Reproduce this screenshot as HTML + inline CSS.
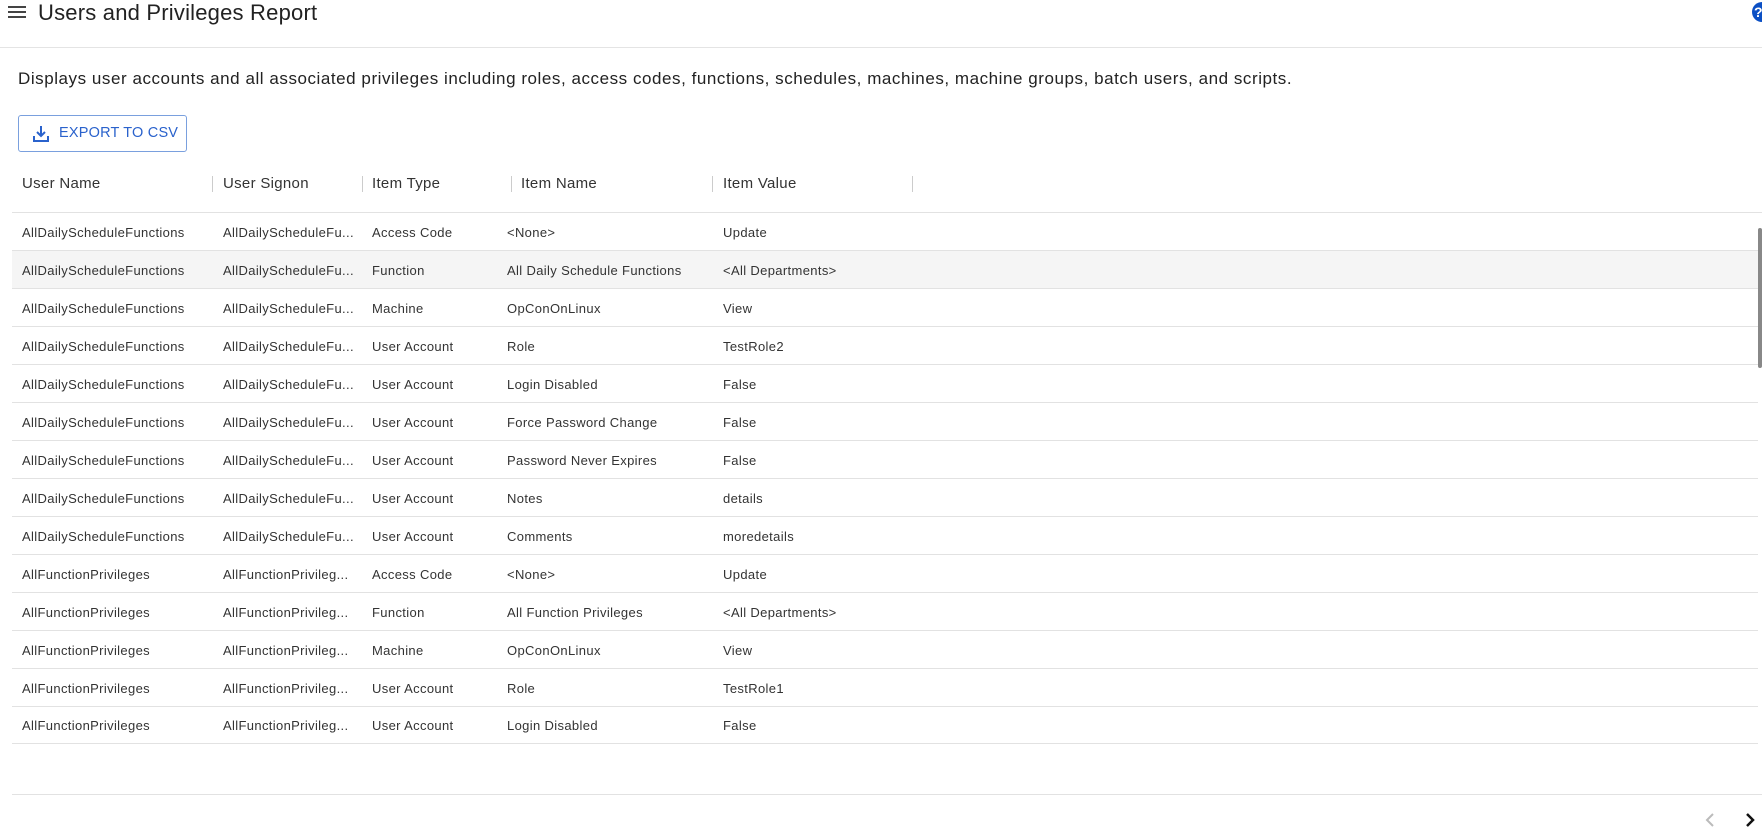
<!DOCTYPE html>
<html><head><meta charset="utf-8"><style>
*{box-sizing:border-box;margin:0;padding:0}
body{width:1762px;height:837px;overflow:hidden;background:#fff;font-family:"Liberation Sans",sans-serif;color:#222;position:relative}
.hdr{position:absolute;left:0;top:0;width:1762px;height:48px;border-bottom:1px solid #e4e4e4}
.ham{position:absolute;left:8px;top:6px;width:18px;height:12px}
.ham i{display:block;height:2px;background:#444;margin-bottom:3px}
.title{position:absolute;left:38px;top:0px;font-size:22px;line-height:26px;color:#222;letter-spacing:0.2px}
.help{position:absolute;left:1752px;top:2px;width:20px;height:20px;border-radius:50%;background:#0b4fc4;color:#fff;font-size:14px;font-weight:bold;line-height:20px;text-indent:2px}
.desc{position:absolute;left:18px;top:69px;font-size:17px;letter-spacing:0.55px;line-height:20px;color:#222}
.btn{position:absolute;left:18px;top:115px;width:169px;height:37px;border:1px solid #7aa0de;border-radius:3px;color:#2a62cc;font-size:14.5px;line-height:35px;padding-left:40px;letter-spacing:0.2px}
.btn svg{position:absolute;left:13px;top:9px}
.th{position:absolute;top:174px;font-size:15px;color:#333;line-height:20px;letter-spacing:0.3px}
.sep{position:absolute;top:176px;width:1px;height:16px;background:#ccc}
.row{position:absolute;left:12px;width:1746px;height:38px;border-bottom:1px solid #e2e2e2;font-size:13px;color:#333;letter-spacing:0.35px}
.row span{position:absolute;top:12px;white-space:nowrap}
.hl{background:#f5f5f5}
.line{position:absolute;left:12px;width:1750px;height:1px;background:#e2e2e2}
.sb{position:absolute;left:1758px;top:228px;width:4px;height:140px;background:#888;border-radius:2px}
</style></head><body>
<div class="hdr"><div class="ham"><i></i><i></i><i></i></div><div class="title">Users and Privileges Report</div><div class="help">?</div></div>
<div class="desc">Displays user accounts and all associated privileges including roles, access codes, functions, schedules, machines, machine groups, batch users, and scripts.</div>
<div class="btn"><svg width="18" height="18" viewBox="0 0 18 18" fill="none" stroke="#2a62cc" stroke-width="2"><path d="M9 1v10M5 7l4 4 4-4M2 11v5h14v-5"/></svg>EXPORT TO CSV</div>
<div class="th" style="left:22px">User Name</div><div class="sep" style="left:212px"></div>
<div class="th" style="left:223px">User Signon</div><div class="sep" style="left:362px"></div>
<div class="th" style="left:372px">Item Type</div><div class="sep" style="left:511px"></div>
<div class="th" style="left:521px">Item Name</div><div class="sep" style="left:712px"></div>
<div class="th" style="left:723px">Item Value</div><div class="sep" style="left:912px"></div>
<div class="line" style="top:212px"></div>
<div class="row" style="top:213px"><span style="left:10px">AllDailyScheduleFunctions</span><span style="left:211px">AllDailyScheduleFu...</span><span style="left:360px">Access Code</span><span style="left:495px">&lt;None&gt;</span><span style="left:711px">Update</span></div>
<div class="row hl" style="top:251px"><span style="left:10px">AllDailyScheduleFunctions</span><span style="left:211px">AllDailyScheduleFu...</span><span style="left:360px">Function</span><span style="left:495px">All Daily Schedule Functions</span><span style="left:711px">&lt;All Departments&gt;</span></div>
<div class="row" style="top:289px"><span style="left:10px">AllDailyScheduleFunctions</span><span style="left:211px">AllDailyScheduleFu...</span><span style="left:360px">Machine</span><span style="left:495px">OpConOnLinux</span><span style="left:711px">View</span></div>
<div class="row" style="top:327px"><span style="left:10px">AllDailyScheduleFunctions</span><span style="left:211px">AllDailyScheduleFu...</span><span style="left:360px">User Account</span><span style="left:495px">Role</span><span style="left:711px">TestRole2</span></div>
<div class="row" style="top:365px"><span style="left:10px">AllDailyScheduleFunctions</span><span style="left:211px">AllDailyScheduleFu...</span><span style="left:360px">User Account</span><span style="left:495px">Login Disabled</span><span style="left:711px">False</span></div>
<div class="row" style="top:403px"><span style="left:10px">AllDailyScheduleFunctions</span><span style="left:211px">AllDailyScheduleFu...</span><span style="left:360px">User Account</span><span style="left:495px">Force Password Change</span><span style="left:711px">False</span></div>
<div class="row" style="top:441px"><span style="left:10px">AllDailyScheduleFunctions</span><span style="left:211px">AllDailyScheduleFu...</span><span style="left:360px">User Account</span><span style="left:495px">Password Never Expires</span><span style="left:711px">False</span></div>
<div class="row" style="top:479px"><span style="left:10px">AllDailyScheduleFunctions</span><span style="left:211px">AllDailyScheduleFu...</span><span style="left:360px">User Account</span><span style="left:495px">Notes</span><span style="left:711px">details</span></div>
<div class="row" style="top:517px"><span style="left:10px">AllDailyScheduleFunctions</span><span style="left:211px">AllDailyScheduleFu...</span><span style="left:360px">User Account</span><span style="left:495px">Comments</span><span style="left:711px">moredetails</span></div>
<div class="row" style="top:555px"><span style="left:10px">AllFunctionPrivileges</span><span style="left:211px">AllFunctionPrivileg...</span><span style="left:360px">Access Code</span><span style="left:495px">&lt;None&gt;</span><span style="left:711px">Update</span></div>
<div class="row" style="top:593px"><span style="left:10px">AllFunctionPrivileges</span><span style="left:211px">AllFunctionPrivileg...</span><span style="left:360px">Function</span><span style="left:495px">All Function Privileges</span><span style="left:711px">&lt;All Departments&gt;</span></div>
<div class="row" style="top:631px"><span style="left:10px">AllFunctionPrivileges</span><span style="left:211px">AllFunctionPrivileg...</span><span style="left:360px">Machine</span><span style="left:495px">OpConOnLinux</span><span style="left:711px">View</span></div>
<div class="row" style="top:669px"><span style="left:10px">AllFunctionPrivileges</span><span style="left:211px">AllFunctionPrivileg...</span><span style="left:360px">User Account</span><span style="left:495px">Role</span><span style="left:711px">TestRole1</span></div>
<div class="row" style="top:706px;height:38px"><span style="left:10px">AllFunctionPrivileges</span><span style="left:211px">AllFunctionPrivileg...</span><span style="left:360px">User Account</span><span style="left:495px">Login Disabled</span><span style="left:711px">False</span></div>
<div class="sb"></div>
<div class="line" style="top:794px"></div>
<svg style="position:absolute;left:1704px;top:812px" width="12" height="16" viewBox="0 0 12 16"><path d="M9 2L3 8l6 6" stroke="#bbb" stroke-width="2" fill="none"/></svg>
<svg style="position:absolute;left:1744px;top:812px" width="12" height="16" viewBox="0 0 12 16"><path d="M3 2l6 6-6 6" stroke="#111" stroke-width="2.5" fill="none"/></svg>
</body></html>
